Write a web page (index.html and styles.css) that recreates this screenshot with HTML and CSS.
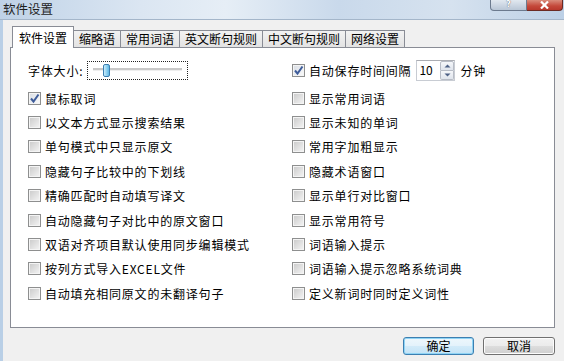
FILE: index.html
```html
<!DOCTYPE html>
<html lang="zh-CN">
<head>
  <meta charset="UTF-8" />
  <title>软件设置</title>
  <link rel="stylesheet" href="styles.css">
</head>
<body>
  <div class="titlebar">
    <span class="title">软件设置</span>
    <div class="caption">
      <span class="cap help">?</span>
      <span class="cap close">
        <svg width="11" height="8" viewBox="0 0 11 8"><path d="M2 0.5 L9 7.5 M9 0.5 L2 7.5" stroke="#fff" stroke-width="2.2"/></svg>
      </span>
    </div>
  </div>

  <div class="window-body">
    <div class="tabs">
      <div class="tab active">软件设置</div>
      <div class="tab">缩略语</div>
      <div class="tab">常用词语</div>
      <div class="tab">英文断句规则</div>
      <div class="tab">中文断句规则</div>
      <div class="tab">网络设置</div>
    </div>

    <div class="panel">
      <div class="top-row">
        <div class="cell left-cell">
          <span class="text">字体大小:</span>
          <div class="slider">
            <span class="track"></span>
            <span class="thumb"></span>
          </div>
        </div>
        <div class="cell">
          <span class="cb checked"><svg width="11" height="11" viewBox="0 0 11 11"><path d="M2 5.5 L4.5 8.5 L9.5 1.5" fill="none" stroke="#3e5c9a" stroke-width="2"/></svg></span>
          <span class="text">自动保存时间间隔</span>
          <div class="spinner">
            <span class="spin-value">10</span>
            <span class="spin-btns">
              <span class="spin up"><svg width="7" height="4" viewBox="0 0 7 4"><path d="M0.5 3.5 L3.5 0.5 L6.5 3.5Z" fill="#4d6185"/></svg></span>
              <span class="spin down"><svg width="7" height="4" viewBox="0 0 7 4"><path d="M0.5 0.5 L3.5 3.5 L6.5 0.5Z" fill="#4d6185"/></svg></span>
            </span>
          </div>
          <span class="text">分钟</span>
        </div>
      </div>

      <div class="options">
        <label class="option"><span class="cb checked"><svg width="11" height="11" viewBox="0 0 11 11"><path d="M2 5.5 L4.5 8.5 L9.5 1.5" fill="none" stroke="#3e5c9a" stroke-width="2"/></svg></span><span class="text">鼠标取词</span></label>
        <label class="option"><span class="cb"></span><span class="text">以文本方式显示搜索结果</span></label>
        <label class="option"><span class="cb"></span><span class="text">单句模式中只显示原文</span></label>
        <label class="option"><span class="cb"></span><span class="text">隐藏句子比较中的下划线</span></label>
        <label class="option"><span class="cb"></span><span class="text">精确匹配时自动填写译文</span></label>
        <label class="option"><span class="cb"></span><span class="text">自动隐藏句子对比中的原文窗口</span></label>
        <label class="option"><span class="cb"></span><span class="text">双语对齐项目默认使用同步编辑模式</span></label>
        <label class="option"><span class="cb"></span><span class="text">按列方式导入EXCEL文件</span></label>
        <label class="option"><span class="cb"></span><span class="text">自动填充相同原文的未翻译句子</span></label>

        <label class="option"><span class="cb"></span><span class="text">显示常用词语</span></label>
        <label class="option"><span class="cb"></span><span class="text">显示未知的单词</span></label>
        <label class="option"><span class="cb"></span><span class="text">常用字加粗显示</span></label>
        <label class="option"><span class="cb"></span><span class="text">隐藏术语窗口</span></label>
        <label class="option"><span class="cb"></span><span class="text">显示单行对比窗口</span></label>
        <label class="option"><span class="cb"></span><span class="text">显示常用符号</span></label>
        <label class="option"><span class="cb"></span><span class="text">词语输入提示</span></label>
        <label class="option"><span class="cb"></span><span class="text">词语输入提示忽略系统词典</span></label>
        <label class="option"><span class="cb"></span><span class="text">定义新词时同时定义词性</span></label>
      </div>
    </div>

    <div class="footer">
      <button class="btn default">确定</button>
      <button class="btn">取消</button>
    </div>
  </div>
</body>
</html>
```

FILE: styles.css
```css
body {
  margin: 0;
  width: 564px;
  height: 361px;
  overflow: hidden;
  background: #f0f0f0;
  font-family: "Noto Sans CJK SC", "DejaVu Sans", sans-serif;
  font-size: 12px;
  color: #000;
}

/* title bar */
.titlebar {
  height: 19px;
  display: flex;
  align-items: flex-start;
  border-bottom: 1px solid #a4b6ca;
  background: linear-gradient(90deg, #bfd2e7 0%, #dbe6f2 25%, #e6eef6 40%, #c9d9eb 60%, #d6e2ef 80%, #bcd0e6 100%);
}
.title {
  padding: 1px 0 0 3px;
  font-size: 12.5px;
  line-height: 16px;
  color: #1e1e1e;
}
.caption {
  margin-left: auto;
  margin-right: 1px;
  display: flex;
}
.cap {
  height: 11px;
  display: flex;
  align-items: center;
  justify-content: center;
  box-sizing: border-box;
}
.help {
  width: 37px;
  border: 1px solid #6c7a8e;
  border-top: none;
  border-radius: 0 0 0 4px;
  background: linear-gradient(#e1e8f0, #b9c6d6);
  color: #fff;
  font-family: "DejaVu Sans", sans-serif;
  font-size: 8px;
  font-weight: bold;
  line-height: 10px;
  text-shadow: 0 0 1px #334;
}
.close {
  width: 36px;
  border: 1px solid #6b2a23;
  border-top: none;
  border-left: none;
  border-radius: 0 0 4px 0;
  background: linear-gradient(#d98c7c, #c4483a 60%, #b8382c);
}

/* window body */
.window-body {
  padding: 7px 9px 0 7px;
  border-left: 3px solid #b9cfe6;
  box-sizing: border-box;
  height: 341px;
}
.tabs {
  display: flex;
  align-items: flex-end;
  height: 20px;
  padding-left: 2px;
  position: relative;
  z-index: 1;
}
.tab {
  height: 16px;
  padding: 0 5px;
  border: 1px solid #898c95;
  border-bottom: none;
  margin-right: -1px;
  background: linear-gradient(#f2f2f2, #e3e3e3);
  line-height: 16px;
  white-space: nowrap;
}
.tab.active {
  height: 21px;
  margin-bottom: -1px;
  padding: 0 6px;
  background: #fff;
  line-height: 21px;
  position: relative;
  z-index: 2;
}

.panel {
  width: 545px;
  height: 281px;
  box-sizing: border-box;
  border: 1px solid #898c95;
  background: #fff;
  padding: 8px 0 0 17px;
}

.top-row {
  display: flex;
  height: 28px;
  margin-bottom: 2px;
}
.cell {
  display: flex;
  align-items: center;
}
.left-cell {
  width: 264px;
}
.text {
  letter-spacing: 0.8px;
  white-space: nowrap;
}

/* slider */
.slider {
  width: 101px;
  height: 19px;
  margin-left: 4px;
  box-sizing: border-box;
  border: 1px dotted #222;
  position: relative;
}
.track {
  position: absolute;
  left: 5px;
  right: 5px;
  top: 6px;
  height: 2px;
  background: #c8c8c8;
  border-bottom: 1px solid #eee;
}
.thumb {
  position: absolute;
  left: 15px;
  top: 2px;
  width: 5px;
  height: 11px;
  border: 1px solid #3c7fb1;
  border-radius: 2px;
  background: linear-gradient(90deg, #c9ecfb, #5fb9e6);
}

/* spinner */
.spinner {
  display: flex;
  height: 19px;
  margin: 0 5px;
  border: 1px solid #c8ccd3;
  border-top-color: #abadb3;
}
.spin-value {
  width: 21px;
  padding-left: 2px;
  line-height: 18px;
}
.spin-btns {
  display: flex;
  flex-direction: column;
  width: 14px;
}
.spin {
  flex: 1;
  display: flex;
  align-items: center;
  justify-content: center;
  border: 1px solid #b7bcc6;
  background: linear-gradient(#f5f7fa, #dfe4ec);
}
.spin.up {
  border-radius: 2px 2px 0 0;
}
.spin.down {
  border-top: none;
  border-radius: 0 0 2px 2px;
}

/* checkboxes */
.cb {
  width: 13px;
  height: 13px;
  box-sizing: border-box;
  flex: none;
  margin-right: 4px;
  border: 1px solid #8e8f8f;
  box-shadow: inset 0 0 0 1px #f4f4f4;
  background: linear-gradient(135deg, #c9c9c9, #f5f5f5);
  display: flex;
  align-items: center;
  justify-content: center;
}
.cb.checked {
  background: linear-gradient(135deg, #d8dde4, #fbfbfb);
}

.options {
  display: grid;
  grid-template-columns: 264px 1fr;
  grid-template-rows: repeat(9, 24.4px);
  grid-auto-flow: column;
}
.option {
  display: flex;
  align-items: center;
}

/* buttons */
.footer {
  display: flex;
  justify-content: flex-end;
  gap: 9px;
  margin-top: 9px;
}
.btn {
  width: 72px;
  height: 18px;
  padding: 0;
  border: 1px solid #707070;
  border-radius: 3px;
  box-shadow: inset 0 0 0 1px #fcfcfc;
  background: linear-gradient(#f2f2f2 0%, #ebebeb 50%, #dddddd 51%, #cfcfcf 100%);
  font-family: inherit;
  font-size: 12px;
  line-height: 16px;
  color: #000;
}
.btn.default {
  width: 71px;
  border-color: #3c7fb1;
  box-shadow: inset 0 0 0 1px #8fd4f5;
  background: linear-gradient(#eef7fc 0%, #e3f2fb 50%, #d2ebf9 51%, #c4e3f6 100%);
}
```
